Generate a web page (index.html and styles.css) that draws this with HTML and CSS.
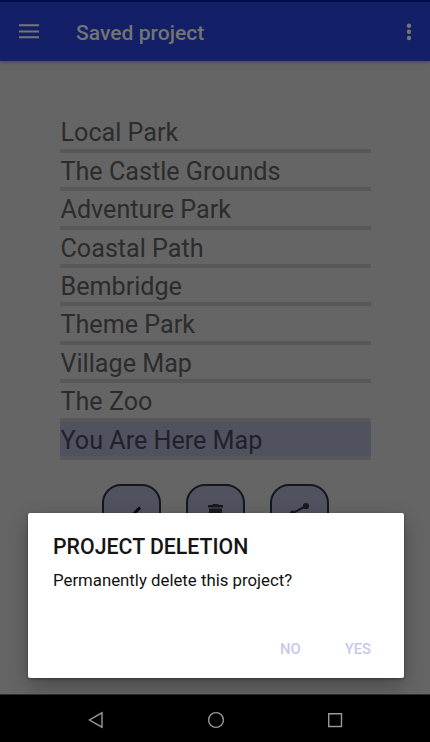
FILE: index.html
```html
<!DOCTYPE html>
<html lang="en">
<head>
<meta charset="utf-8">
<title>Saved project</title>
<link rel="stylesheet" href="styles.css">
</head>
<body>
<div class="screen">
  <header class="appbar">
    <svg class="menu" width="20" height="15" viewBox="0 0 20 15"><path d="M0 1.2h20M0 7.4h20M0 13.3h20"/></svg>
    <h1 class="title"><span>Saved project</span></h1>
    <svg class="more" width="6" height="18" viewBox="0 0 6 18"><circle cx="3" cy="2.7" r="2.2"/><circle cx="3" cy="8.8" r="2.2"/><circle cx="3" cy="15" r="2.2"/></svg>
  </header>
  <main class="content">
    <ul class="projects">
      <li><span>Local Park</span></li>
      <li><span>The Castle Grounds</span></li>
      <li><span>Adventure Park</span></li>
      <li><span>Coastal Path</span></li>
      <li><span>Bembridge</span></li>
      <li><span>Theme Park</span></li>
      <li><span>Village Map</span></li>
      <li><span>The Zoo</span></li>
      <li class="selected"><span>You Are Here Map</span></li>
    </ul>
    <div class="actions">
      <button class="action" aria-label="Open"><svg width="55" height="54" viewBox="0 0 55 54"><path class="check" d="M17 29l6 6 13-13.5"/></svg></button>
      <button class="action" aria-label="Delete"><svg width="55" height="54" viewBox="0 0 55 54"><path d="M20 19h4l1-1h5l1 1h4v2.5H20zM21 22.5h13V38H21z"/></svg></button>
      <button class="action" aria-label="Share"><svg width="55" height="54" viewBox="0 0 55 54"><path class="link" d="M34 20L21 27l13 8"/><circle cx="34" cy="20" r="3.1"/><circle cx="21" cy="27.5" r="3.1"/><circle cx="34" cy="35" r="3.1"/></svg></button>
    </div>
  </main>
  <nav class="navbar">
    <svg width="16" height="18" viewBox="0 0 16 18"><path d="M14 1.8v14.4L1.5 9z"/></svg>
    <svg width="18" height="18" viewBox="0 0 18 18"><circle cx="9" cy="9" r="7.4"/></svg>
    <svg width="16" height="16" viewBox="0 0 16 16"><path d="M1.7 1.7h12.8v12.8H1.7z"/></svg>
  </nav>
  <section class="dialog" role="dialog">
    <h2><span>PROJECT DELETION</span></h2>
    <p><span>Permanently delete this project?</span></p>
    <div class="choices"><span>NO</span><span>YES</span></div>
  </section>
</div>
</body>
</html>
```
FILE: styles.css
```css
* { box-sizing: border-box; }
body { margin: 0; font-family: Roboto, sans-serif; }
h1, h2, p, ul { margin: 0; padding: 0; font-weight: 400; }
svg { display: block; flex: none; }
.screen {
  position: relative;
  display: flex;
  flex-direction: column;
  width: 430px;
  height: 742px;
  overflow: hidden;
  background: #656565;
}
.appbar {
  display: flex;
  align-items: center;
  height: 61px;
  padding: 1px 18px 0 19px;
  border-top: 2px solid #000c4b;
  background: #131f66;
  box-shadow: 0 1px 4px rgba(0, 0, 0, .35);
}
.menu { margin-top: -2px; stroke: #777673; stroke-width: 2; }
.title { flex: 1; margin-left: 37px; padding-top: 2px; font-size: 21.1px; font-weight: 500; line-height: 28px; color: #747472; }
.more { fill: #777673; }
.content { flex: 1; padding: 53.4px 59px 0 60px; }
.projects { list-style: none; }
.projects li {
  height: 38.4px;
  border-bottom: 4.4px solid #585858;
  padding-left: .5px;
  font-size: 25.15px;
  line-height: 37px;
  color: #2c2c2c;
  white-space: nowrap;
}
.projects .selected { background: #50525f; background-clip: padding-box; color: #20212a; }
.actions { display: flex; gap: 25px; margin: 23.9px 0 0 42px; }
.action {
  width: 59px;
  height: 58px;
  padding: 0;
  border: 2px solid #12191e;
  border-radius: 19px;
  background: #50525f;
  overflow: hidden;
  fill: #191a1c;
}
.check { fill: none; stroke: #080808; stroke-width: 3; }
.link { fill: none; stroke: #191a1c; stroke-width: 2; }
.navbar {
  display: flex;
  align-items: center;
  justify-content: space-between;
  height: 48px;
  padding: 2px 87px 0 88px;
  border-top: 1px solid #303030;
  background: #000;
  fill: none;
  stroke: #999;
  stroke-width: 1.4;
}
.dialog {
  position: absolute;
  left: 28px;
  top: 513px;
  width: 376px;
  height: 165px;
  padding: 20px 33px 18px 25px;
  display: flex;
  flex-direction: column;
  border-radius: 2px;
  background: #fff;
  box-shadow: 0 8px 20px rgba(0, 0, 0, .28), 0 1px 3px rgba(0, 0, 0, .35);
  clip-path: inset(-40px -40px -16px -40px);
}
.dialog h2 { font-size: 21.3px; font-weight: 500; line-height: 28px; color: #151515; }
.dialog p { margin-top: 8px; font-size: 16.8px; line-height: 22px; color: #111; }
.choices {
  display: flex;
  justify-content: flex-end;
  gap: 44px;
  margin-top: auto;
  font-size: 14.8px;
  font-weight: 500;
  line-height: 22px;
  color: #c5cae9;
}
```
